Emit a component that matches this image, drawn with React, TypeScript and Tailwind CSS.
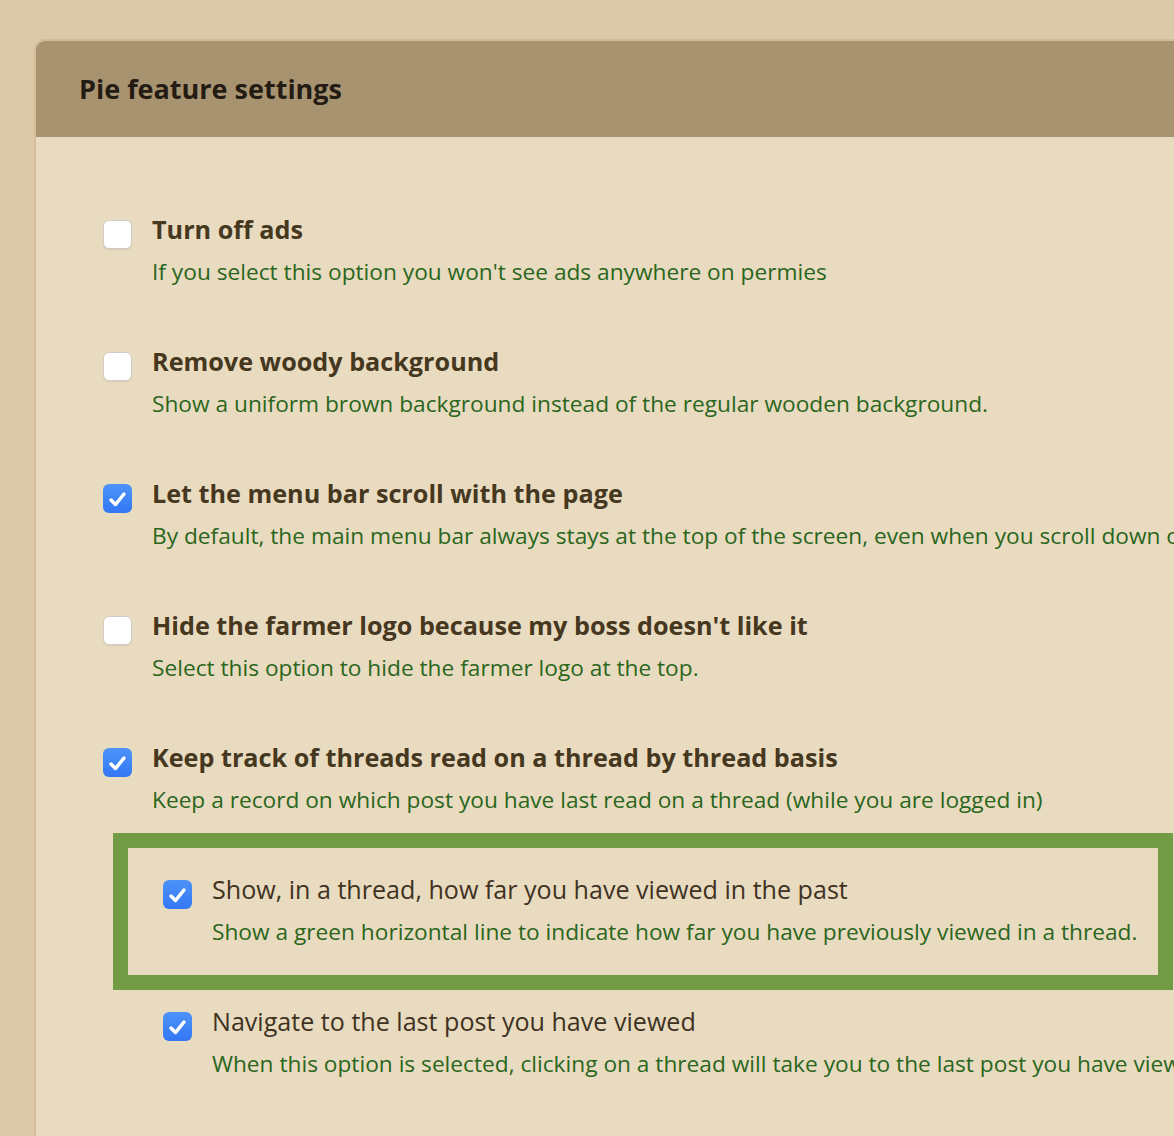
import React from "react";

type Option = {
	title: string;
	desc: string;
	checked: boolean;
};

const mainOptions: Option[] = [
	{
		title: "Turn off ads",
		desc: "If you select this option you won't see ads anywhere on permies",
		checked: false,
	},
	{
		title: "Remove woody background",
		desc: "Show a uniform brown background instead of the regular wooden background.",
		checked: false,
	},
	{
		title: "Let the menu bar scroll with the page",
		desc: "By default, the main menu bar always stays at the top of the screen, even when you scroll down on the page.",
		checked: true,
	},
	{
		title: "Hide the farmer logo because my boss doesn't like it",
		desc: "Select this option to hide the farmer logo at the top.",
		checked: false,
	},
	{
		title: "Keep track of threads read on a thread by thread basis",
		desc: "Keep a record on which post you have last read on a thread (while you are logged in)",
		checked: true,
	},
];

function Checkbox({ checked }: { checked: boolean }) {
	if (!checked)
		return (
			<div className="w-[29px] h-[29px] flex-none rounded-[6px] bg-white border border-[#d2cdc4] shadow-[0_1px_1px_rgba(0,0,0,0.08)]" />
		);
	return (
		<div className="w-[29px] h-[29px] flex-none rounded-[6px] bg-gradient-to-b from-[#4d93f9] to-[#3477f5] flex items-center justify-center">
			<svg width="29" height="29" viewBox="0 0 29 29" fill="none">
				<path
					d="M8 16 L12.5 20.5 L21 10"
					stroke="white"
					strokeWidth="3.5"
					strokeLinecap="round"
					strokeLinejoin="round"
				/>
			</svg>
		</div>
	);
}

function OptionRow({ option, sub }: { option: Option; sub?: boolean }) {
	return (
		<div className="flex flex-row items-start">
			<div className="pt-[7px] mr-[20px]">
				<Checkbox checked={option.checked} />
			</div>
			<div className="flex flex-col whitespace-nowrap">
				<div
					className={
						sub
							? "text-[25.1px] leading-[32px] text-[#3f3222]"
							: "text-[25.2px] leading-[32px] font-bold text-[#46371f]"
					}
				>
					{option.title}
				</div>
				<div className="mt-[11px] text-[22.7px] leading-[32px] text-[#2a661c]">{option.desc}</div>
			</div>
		</div>
	);
}

export default function App() {
	return (
		<div
			className="w-[1174px] h-[1136px] overflow-hidden bg-[#dcc9a7] pt-[39px] pl-[34px]"
			style={{ fontFamily: '"Open Sans", "Noto Sans", sans-serif' }}
		>
			<div className="w-[1400px] h-[1200px] rounded-tl-[11px] border-2 border-[#d3bd98] overflow-hidden bg-[#e9dbc0]">
				<div className="h-[96px] bg-[#a89371] pl-[43px] flex items-center">
					<h1 className="text-[27px] font-bold text-[#241b13] mt-[1px]">Pie feature settings</h1>
				</div>
				<div className="pt-[76px] flex flex-col">
					<div className="flex flex-col gap-[57px] pl-[67px]">
						{mainOptions.map((o) => (
							<OptionRow key={o.title} option={o} />
						))}
					</div>
					<div className="ml-[77px] mt-[17px] w-[1060px] border-[15px] border-[#739a44] pt-[25px] pb-[27px] pl-[35px]">
						<OptionRow
							sub
							option={{
								title: "Show, in a thread, how far you have viewed in the past",
								desc: "Show a green horizontal line to indicate how far you have previously viewed in a thread.",
								checked: true,
							}}
						/>
					</div>
					<div className="mt-[15px] pl-[127px]">
						<OptionRow
							sub
							option={{
								title: "Navigate to the last post you have viewed",
								desc: "When this option is selected, clicking on a thread will take you to the last post you have viewed.",
								checked: true,
							}}
						/>
					</div>
				</div>
			</div>
		</div>
	);
}
